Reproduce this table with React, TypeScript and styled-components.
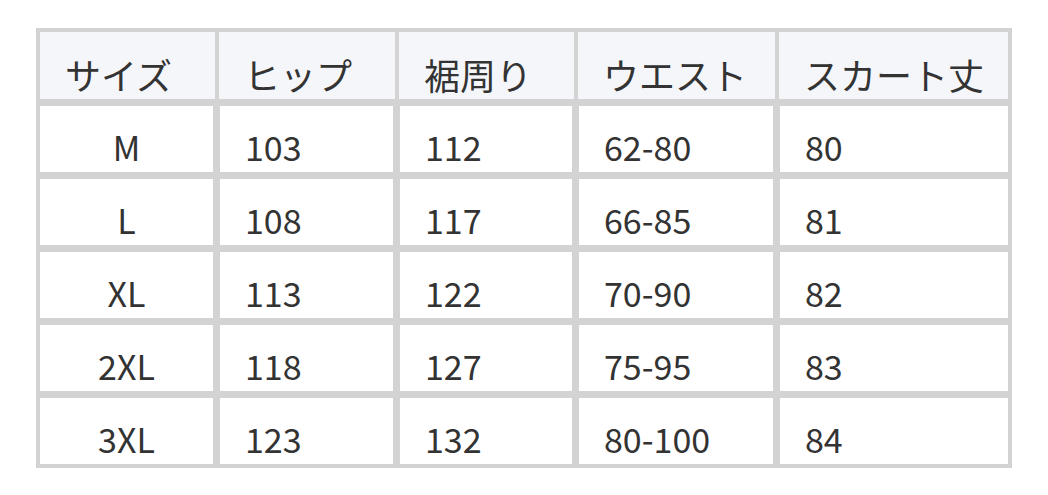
import React from "react";
import styled, { createGlobalStyle } from "styled-components";

const GlobalStyle = createGlobalStyle`
  html, body {
    margin: 0;
    padding: 0;
    background: #ffffff;
  }
  body {
    font-family: "Noto Sans CJK JP", "Noto Sans", sans-serif;
    color: #333333;
  }
`;

const headers = ["サイズ", "ヒップ", "裾周り", "ウエスト", "スカート丈"];

const rows = [
  ["M", "103", "112", "62-80", "80"],
  ["L", "108", "117", "66-85", "81"],
  ["XL", "113", "122", "70-90", "82"],
  ["2XL", "118", "127", "75-95", "83"],
  ["3XL", "123", "132", "80-100", "84"],
];

const App: React.FC = () => {
  return (
    <Page>
      <GlobalStyle />
      <Table>
        {headers.map((h) => (
          <HeadCell key={h}>{h}</HeadCell>
        ))}
        {rows.map((row) =>
          row.map((value, i) => (
            <Cell key={row[0] + i} centered={i === 0}>
              {value}
            </Cell>
          ))
        )}
      </Table>
    </Page>
  );
};

const Page = styled.div`
  width: 1048px;
  height: 495px;
  padding: 28px 0 0 36px;
  box-sizing: border-box;
`;

const Table = styled.div`
  display: grid;
  grid-template-columns: 173px 173px 172px 194px 228px;
  grid-template-rows: 67px repeat(5, 66px);
  column-gap: 7px;
  row-gap: 7px;
  width: 976px;
  box-sizing: border-box;
  padding: 4px;
  background: #d3d3d3;
`;

const HeadCell = styled.div`
  display: flex;
  align-items: flex-end;
  background: #f5f6fa;
  font-size: 36px;
  line-height: 1;
  padding: 0 0 7px 25px;
  margin: 0 -2px 0 -1px;
  white-space: nowrap;
  &:first-child {
    margin-left: 0;
  }
  &:nth-child(5) {
    margin-right: 0;
  }
`;

const Cell = styled.div<{ centered?: boolean }>`
  display: flex;
  align-items: flex-end;
  justify-content: ${(p) => (p.centered ? "center" : "flex-start")};
  background: #ffffff;
  font-size: 34px;
  line-height: 1;
  padding: ${(p) => (p.centered ? "0 0 8px 0" : "0 0 8px 25px")};
  white-space: nowrap;
`;

export default App;
